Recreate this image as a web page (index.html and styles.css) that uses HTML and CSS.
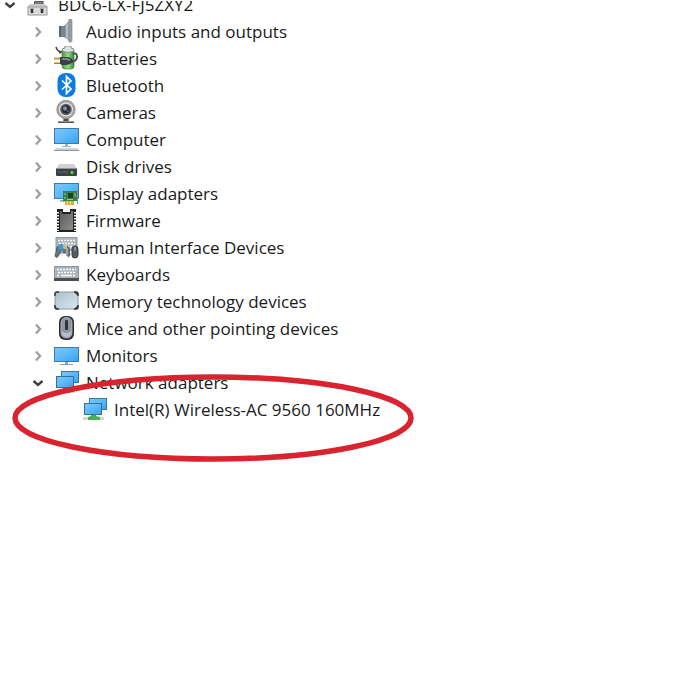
FILE: index.html
```html
<!DOCTYPE html>
<html lang="en">
<head>
    <meta charset="UTF-8">
    <meta name="viewport" content="width=device-width, initial-scale=1.0">
    <title>Device Manager</title>
    <link rel="stylesheet" href="styles.css">
</head>
<body>
    <!-- Shared shapes and gradients -->
    <svg class="defs" aria-hidden="true">
        <defs>
            <linearGradient id="screen" x1="0" y1="0" x2="1" y2="1">
                <stop offset="0" stop-color="#7cc8fa"/>
                <stop offset="0.5" stop-color="#5bb9fb"/>
                <stop offset="1" stop-color="#36a2f3"/>
            </linearGradient>
            <linearGradient id="metal" x1="0" y1="0" x2="1" y2="0">
                <stop offset="0" stop-color="#6d7278"/>
                <stop offset="0.5" stop-color="#c3c8cc"/>
                <stop offset="1" stop-color="#7c8288"/>
            </linearGradient>
            <linearGradient id="green" x1="0" y1="0" x2="1" y2="0">
                <stop offset="0" stop-color="#3e9e3c"/>
                <stop offset="0.5" stop-color="#8fe07f"/>
                <stop offset="1" stop-color="#2f8a35"/>
            </linearGradient>
            <linearGradient id="chip" x1="0" y1="0" x2="1" y2="1">
                <stop offset="0" stop-color="#5b5b5b"/>
                <stop offset="1" stop-color="#8b8b8b"/>
            </linearGradient>
            <linearGradient id="glass" x1="0" y1="0" x2="1" y2="1">
                <stop offset="0" stop-color="#a9bfcc"/>
                <stop offset="1" stop-color="#dbe9f2"/>
            </linearGradient>
            <symbol id="chevron" viewBox="0 0 12 12">
                <path d="M4 1.500 L8 6 L4 10.500" fill="none" stroke="currentColor" stroke-width="2.400"/>
            </symbol>
            <symbol id="network" viewBox="0 0 25 25">
                <rect x="7.5" y="1.5" width="17" height="11" fill="url(#screen)" stroke="#34789f"/>
                <rect x="2.5" y="6.5" width="17" height="11" fill="url(#screen)" stroke="#34709a"/>
            </symbol>
        </defs>
    </svg>

    <main class="device-manager">
        <ul class="tree">
            <li>
                <div class="row">
                    <button class="toggle open" aria-label="Collapse BDC6-LX-FJ5ZXY2"><svg><use href="#chevron"/></svg></button>
                    <svg class="icon" viewBox="0 0 25 25">
                        <path d="M8 13 L9 9 H17 V13" fill="#7b7b7b" stroke="#444"/>
                        <path d="M4 12 H19 L22 15 H1 Z" fill="#c9c9c9"/>
                        <rect x="2" y="15" width="19" height="8" fill="#d9dadb" stroke="#9a9a9a"/>
                        <rect x="4" y="16" width="4" height="5" fill="#a9a9a9"/>
                        <rect x="14" y="16" width="4" height="5" fill="#a9a9a9"/>
                        <rect x="5" y="17" width="2" height="4" fill="#333"/>
                        <rect x="15" y="17" width="2" height="4" fill="#333"/>
                    </svg>
                    <span class="name">BDC6-LX-FJ5ZXY2</span>
                </div>
                <ul class="group">
                    <li class="row">
                        <button class="toggle" aria-label="Expand Audio inputs and outputs"><svg><use href="#chevron"/></svg></button>
                        <svg class="icon" viewBox="0 0 25 25">
                            <rect x="5" y="7" width="6" height="11" fill="#7d858b"/>
                            <rect x="5" y="7" width="2" height="11" fill="#5f666b"/>
                            <path d="M10 7 L16 0 V23 L10 18 Z" fill="url(#metal)"/>
                            <path d="M15 0 H17 Q18 0 18 2 V21 Q18 23 17 23 H15 Z" fill="#9ba1a6" stroke="#7a8187" stroke-width="0.6"/>
                        </svg>
                        <span class="name">Audio inputs and outputs</span>
                    </li>
                    <li class="row">
                        <button class="toggle" aria-label="Expand Batteries"><svg><use href="#chevron"/></svg></button>
                        <svg class="icon" viewBox="0 0 25 25">
                            <path d="M2 1 Q3 5 7 6 M5 7 Q9 6 10 2" fill="none" stroke="#444" stroke-width="1.500"/>
                            <rect x="8" y="2" width="12" height="21" rx="3" fill="url(#green)" stroke="#4d7c4d" stroke-width="0.7"/>
                            <path d="M8 5 Q8 2 11 2 V0 H17 V2 Q20 2 20 5 Q14 8 8 5 Z" fill="#dce1e4" stroke="#777" stroke-width="0.7"/>
                            <path d="M17 16 Q23 15 23 11 Q23 6 19 8" fill="none" stroke="#4b514b" stroke-width="2"/>
                            <path d="M0 12.500 H7 M0 17 H7" stroke="#a5852f" stroke-width="2"/>
                            <path d="M0 12 H6 M0 16.500 H6" stroke="#ecd889" stroke-width="0.8"/>
                            <path d="M6 11 H12 Q18 11 19 15 Q18 18 12 19 H8 L6 18 Z" fill="#3c4044"/>
                            <path d="M8 13 H12 L16 14" fill="none" stroke="#92989d" stroke-width="1.5"/>
                        </svg>
                        <span class="name">Batteries</span>
                    </li>
                    <li class="row">
                        <button class="toggle" aria-label="Expand Bluetooth"><svg><use href="#chevron"/></svg></button>
                        <svg class="icon" viewBox="0 0 25 25">
                            <rect x="3.5" y="0" width="18" height="24" rx="8" fill="#0d7be4"/>
                            <path d="M8 7.5 L17 16 L12.5 20.500 V3.500 L17 8 L8 16.500" fill="none" stroke="#fff" stroke-width="1.700"/>
                        </svg>
                        <span class="name">Bluetooth</span>
                    </li>
                    <li class="row">
                        <button class="toggle" aria-label="Expand Cameras"><svg><use href="#chevron"/></svg></button>
                        <svg class="icon" viewBox="0 0 25 25">
                            <path d="M9 17 H15 V21 H20 V23 H4 V21 H9 Z" fill="#9a928f"/>
                            <path d="M4 22.500 H20" stroke="#5f5856"/>
                            <path d="M10 19 H14 V21 H10 Z" fill="#4d4948"/>
                            <circle cx="12" cy="9.500" r="9.200" fill="#aaa4a2" stroke="#8b8583" stroke-width="0.800"/>
                            <circle cx="12" cy="9.500" r="7" fill="#e3e1e0"/>
                            <circle cx="12" cy="9.500" r="5.800" fill="#5c6064"/>
                            <circle cx="12" cy="9.500" r="4.200" fill="#263039"/>
                            <circle cx="11" cy="8.500" r="2" fill="#8296a4"/>
                            <circle cx="14" cy="11" r="1" fill="#526b80"/>
                        </svg>
                        <span class="name">Cameras</span>
                    </li>
                    <li class="row">
                        <button class="toggle" aria-label="Expand Computer"><svg><use href="#chevron"/></svg></button>
                        <svg class="icon" viewBox="0 0 25 25">
                            <rect x="0.500" y="1.500" width="24" height="15" fill="url(#screen)" stroke="#3b7ba4"/>
                            <path d="M11 17 H14 V19 H17 V20 H8 V19 H11 Z" fill="#9bb4c4"/>
                            <path d="M2 21 H23 L25 24 H0 Z" fill="#cbd2d7"/>
                            <path d="M0 23.500 H25" stroke="#8d979e"/>
                        </svg>
                        <span class="name">Computer</span>
                    </li>
                    <li class="row">
                        <button class="toggle" aria-label="Expand Disk drives"><svg><use href="#chevron"/></svg></button>
                        <svg class="icon" viewBox="0 0 25 25">
                            <path d="M5 10 H20 L23 15 H2 Z" fill="#d0d1d2"/>
                            <rect x="2" y="14" width="21" height="8" rx="1" fill="#3e4143"/>
                            <path d="M2 14.500 H23" stroke="#909293"/>
                            <path d="M4 18 H14" stroke="#515456" stroke-width="2"/>
                            <circle cx="18" cy="18.500" r="2" fill="#257d2a"/>
                            <circle cx="18" cy="18.500" r="1.200" fill="#67ed57"/>
                        </svg>
                        <span class="name">Disk drives</span>
                    </li>
                    <li class="row">
                        <button class="toggle" aria-label="Expand Display adapters"><svg><use href="#chevron"/></svg></button>
                        <svg class="icon" viewBox="0 0 25 25">
                            <rect x="0.500" y="2.500" width="24" height="15" fill="url(#screen)" stroke="#3b7ba4"/>
                            <path d="M6 20 H12" stroke="#9bb4c4" stroke-width="2"/>
                            <rect x="11" y="19" width="9" height="5" fill="#e6a928"/>
                            <path d="M13.500 20 V24 M16.500 20 V24" stroke="#f6d982"/>
                            <rect x="9" y="10" width="14" height="10" fill="#35804b"/>
                            <rect x="14" y="12" width="5" height="5" fill="#1e4029"/>
                            <path d="M11 12 V14 M11 16 V18 M21 12 V16 M13 18.500 H19" stroke="#a7c487"/>
                            <path d="M23.500 8 V23" stroke="#88908b"/>
                        </svg>
                        <span class="name">Display adapters</span>
                    </li>
                    <li class="row">
                        <button class="toggle" aria-label="Expand Firmware"><svg><use href="#chevron"/></svg></button>
                        <svg class="icon" viewBox="0 0 25 25">
                            <path d="M3 1 H9 V4 H16 V1 H22 V24 H3 Z" fill="#242424"/>
                            <path d="M6 3 H8 V6 H17 V3 H19 V22 H6 Z" fill="url(#chip)"/>
                            <path d="M3.500 4 V23 M21.500 4 V23" stroke="#f3f3f3" stroke-width="3" stroke-dasharray="1.500 1.500"/>
                        </svg>
                        <span class="name">Firmware</span>
                    </li>
                    <li class="row">
                        <button class="toggle" aria-label="Expand Human Interface Devices"><svg><use href="#chevron"/></svg></button>
                        <svg class="icon" viewBox="0 0 25 25">
                            <rect x="2" y="2.500" width="21" height="13" fill="#aeb6bb" stroke="#929ba1"/>
                            <path d="M4 5.500 H21 M5 8.500 H21 M4 11.500 H21" stroke="#f4f6f7" stroke-width="1.500" stroke-dasharray="2 1"/>
                            <path d="M3 12 Q5 10 7 12 H11 Q14 10 15 13 L16 20 Q14 24 12 18 H6 Q3 25 1 21 Z" fill="#69747b" stroke="#454f55" stroke-width="0.800"/>
                            <circle cx="7" cy="12" r="3" fill="#3b99d7"/>
                            <circle cx="11" cy="12" r="2" fill="#dfbd67"/>
                            <path d="M8 16 V21 M13 13 V20" stroke="#d8dee2"/>
                            <rect x="18" y="11" width="6" height="12" rx="3" fill="#555d63" stroke="#363d42"/>
                            <path d="M21 12 V16" stroke="#b9c1c6"/>
                        </svg>
                        <span class="name">Human Interface Devices</span>
                    </li>
                    <li class="row">
                        <button class="toggle" aria-label="Expand Keyboards"><svg><use href="#chevron"/></svg></button>
                        <svg class="icon" viewBox="0 0 25 25">
                            <rect x="0.500" y="4.500" width="24" height="14" fill="#adb4b9" stroke="#8e969c"/>
                            <path d="M3 7.500 H22 M4 10.500 H22 M3 13.500 H6 M19 13.500 H22" stroke="#fff" stroke-width="1.500" stroke-dasharray="2 1"/>
                            <path d="M7 13.500 H18" stroke="#fff" stroke-width="1.500"/>
                            <rect x="0" y="16" width="25" height="3" fill="#4a5055"/>
                        </svg>
                        <span class="name">Keyboards</span>
                    </li>
                    <li class="row">
                        <button class="toggle" aria-label="Expand Memory technology devices"><svg><use href="#chevron"/></svg></button>
                        <svg class="icon" viewBox="0 0 25 25">
                            <rect x="1" y="3" width="23" height="17" rx="2" fill="url(#glass)" stroke="#8b979f"/>
                            <path d="M1 7 V5 Q1 3 3 3 H5 M20 3 H22 Q24 3 24 5 V7 M1 16 V18 Q1 20 3 20 H5 M20 20 H22 Q24 20 24 18 V16" fill="none" stroke="#35383b" stroke-width="1.500"/>
                            <path d="M20 3 H24 V7 Z M1 17 V20 H4 Z M24 16 V20 H20 Z" fill="#35383b"/>
                        </svg>
                        <span class="name">Memory technology devices</span>
                    </li>
                    <li class="row">
                        <button class="toggle" aria-label="Expand Mice and other pointing devices"><svg><use href="#chevron"/></svg></button>
                        <svg class="icon" viewBox="0 0 25 25">
                            <rect x="5" y="0" width="15" height="24" rx="6" fill="#282b30"/>
                            <rect x="7" y="1.500" width="11" height="20.500" rx="5" fill="#8e96a1" stroke="#bcc3cc" stroke-width="0.800"/>
                            <path d="M7.500 15 Q12.500 19 17.500 15 Q17 21 12.500 21 Q8 21 7.500 15 Z" fill="#b7bec8"/>
                            <rect x="11" y="4" width="3" height="10" rx="1" fill="#30343a"/>
                        </svg>
                        <span class="name">Mice and other pointing devices</span>
                    </li>
                    <li class="row">
                        <button class="toggle" aria-label="Expand Monitors"><svg><use href="#chevron"/></svg></button>
                        <svg class="icon" viewBox="0 0 25 25">
                            <rect x="0.500" y="4.500" width="24" height="14" fill="url(#screen)" stroke="#3b7ba4"/>
                            <path d="M11 19 H14 V21 H19 V22 H6 V21 H11 Z" fill="#8ba5b6"/>
                        </svg>
                        <span class="name">Monitors</span>
                    </li>
                    <li class="network">
                        <div class="row">
                            <button class="toggle open" aria-label="Collapse Network adapters"><svg><use href="#chevron"/></svg></button>
                            <svg class="icon" viewBox="0 0 25 25">
                                <path d="M1 21.500 H21" stroke="#d3d8d5" stroke-width="3"/>
                                <path d="M9 18 H14 V20 H16 V23 H7 V20 H9 Z" fill="#48ae52"/>
                                <use href="#network"/>
                            </svg>
                            <span class="name">Network adapters</span>
                        </div>
                        <ul class="devices">
                            <li class="row">
                                <svg class="icon" viewBox="0 0 25 25">
                                    <path d="M1 21.500 H22" stroke="#d3d8d5" stroke-width="3"/>
                                    <path d="M9 18 H14 V19 L18 20 V23 H6 V20 L9 19 Z" fill="#48ae52"/>
                                    <use href="#network"/>
                                </svg>
                                <span class="name">Intel(R) Wireless-AC 9560 160MHz</span>
                            </li>
                        </ul>
                        <!-- Red mark around the wireless card -->
                        <svg class="highlight" viewBox="0 0 402 88" aria-hidden="true">
                            <ellipse cx="201" cy="44" rx="198" ry="41" fill="none" stroke="#d9232e" stroke-width="5.500"/>
                        </svg>
                    </li>
                </ul>
            </li>
        </ul>
    </main>
</body>
</html>
```
FILE: styles.css
```css
body {
    margin: 0;
    background-color: #fff;
    color: #1a1a1a;
    font-family: "Open Sans", "Noto Sans", sans-serif;
    font-size: 17px;
}

ul {
    list-style: none;
    margin: 0;
    padding: 0;
}

.defs {
    position: absolute;
    width: 0;
    height: 0;
}

.device-manager {
    min-height: calc(100vh - 1px);
    margin-top: 1px;
    overflow: hidden;
}

/* The list is scrolled a little, so the first row is cut off */
.tree {
    margin-top: -9px;
}

.row {
    display: flex;
    gap: 7px;
    height: 27px;
    line-height: 26px;
    white-space: nowrap;
}

.group .row {
    padding-left: 28px;
}

.group .devices .row {
    padding-left: 82px;
}

.toggle {
    display: flex;
    align-items: center;
    justify-content: center;
    flex: none;
    width: 19px;
    height: 26px;
    padding: 0;
    border: none;
    background: none;
    color: #a0a0a0;
    cursor: pointer;
}

.toggle svg {
    width: 12px;
    height: 12px;
}

.toggle.open {
    color: #404040;
}

.toggle.open svg {
    transform: rotate(90deg);
}

.icon {
    flex: none;
    width: 25px;
    height: 25px;
}

.network {
    position: relative;
}

.highlight {
    position: absolute;
    top: 4px;
    left: 12px;
    width: 402px;
    height: 88px;
    pointer-events: none;
}
```
